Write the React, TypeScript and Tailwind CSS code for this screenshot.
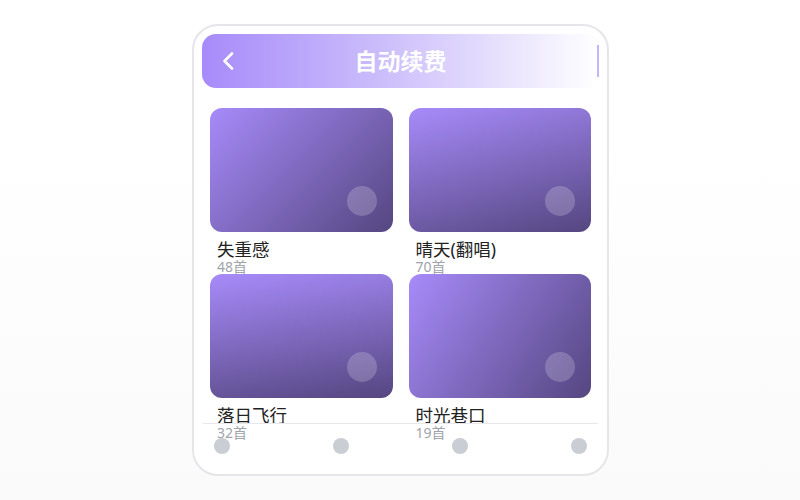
import React from "react";

const items = [
  { title: "失重感", count: "48首", grad: "bg-[linear-gradient(135deg,#a78bfa,#554680)]" },
  { title: "晴天(翻唱)", count: "70首", grad: "bg-[linear-gradient(165deg,#a78bfa,#554680)]" },
  { title: "落日飞行", count: "32首", grad: "bg-[linear-gradient(170deg,#a78bfa,#554680)]" },
  { title: "时光巷口", count: "19首", grad: "bg-[linear-gradient(125deg,#a78bfa,#554680)]" },
];

export default function App() {
  return (
    <div
      className="w-[800px] h-[500px] flex items-center pl-[192px] bg-[linear-gradient(to_bottom,#ffffff_30%,#fafafb)]"
      style={{ fontFamily: '"Noto Sans", "Noto Sans CJK SC", sans-serif' }}
    >
      <div className="w-[417px] h-[452px] rounded-[26px] border-2 border-[#e6e6ea] bg-white p-2 flex flex-col">
        <div className="h-[54px] shrink-0 rounded-[14px] bg-[linear-gradient(to_right,#a78bfa,#cbbdfb_45%,#ffffff)] flex items-center relative">
          <div className="pl-[20px] w-[60px] flex items-center">
            <svg width="12" height="18" viewBox="0 0 12 18" fill="none">
              <polyline
                points="10,1.5 2.5,9 10,16.5"
                stroke="white"
                strokeWidth="2.6"
                strokeLinecap="round"
                strokeLinejoin="round"
              />
            </svg>
          </div>
          <div className="flex-1 text-center text-white font-bold text-[23px] leading-[28px] -mt-[1px]">
            自动续费
          </div>
          <div className="w-[60px] flex justify-end">
            <div className="w-[2px] h-[32px] bg-[#c4b5fd]" />
          </div>
        </div>
        <div className="flex-1 min-h-0 px-2 pt-5">
          <div className="grid grid-cols-2 gap-x-4">
            {items.map((it) => (
              <div key={it.title} className="h-[166px] flex flex-col">
                <div className={`relative h-[124px] shrink-0 rounded-xl ${it.grad}`}>
                  <div className="absolute right-4 bottom-4 w-[30px] h-[30px] rounded-full bg-white/20" />
                </div>
                <div className="pl-[7px] mt-[7px] text-[17.5px] leading-[21px] text-[#222]">{it.title}</div>
                <div className="pl-[7px] text-[14px] leading-[14px] text-[#a0a4ab]">{it.count}</div>
              </div>
            ))}
          </div>
        </div>
        <div className="mx-px h-[43px] shrink-0 border-t border-[#e8e8ec] px-[11px] pt-[14px] flex justify-between items-start relative">
          <div className="w-4 h-4 rounded-full bg-[#c9cdd4]" />
          <div className="w-4 h-4 rounded-full bg-[#c9cdd4]" />
          <div className="w-4 h-4 rounded-full bg-[#c9cdd4]" />
          <div className="w-4 h-4 rounded-full bg-[#c9cdd4]" />
        </div>
      </div>
    </div>
  );
}
